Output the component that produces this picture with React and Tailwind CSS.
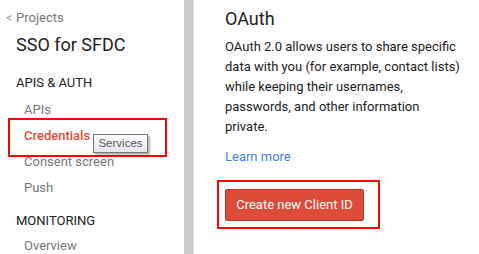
import React from 'react';

const navItem = 'h-[26px] flex items-center pl-[24px] text-[13px] text-[#777777]';
const sectionHead = 'h-[18px] flex items-center pl-[16px] text-[13px] text-[#222222] uppercase';

function Sidebar() {
  return (
    <div className="w-[184px] shrink-0 bg-white">
      {/* back link */}
      <div className="h-[35px] flex items-center pl-[6px] text-[13px] text-[#777777]">
        <span className="text-[12px] text-[#999999] mr-[4px]">&lt;</span>
        <span>Projects</span>
      </div>
      <div className="h-[19px] flex items-center pl-[16px] text-[18px] text-[#222222]">SSO for SFDC</div>

      <div className="mt-[20px]">
        <div className={sectionHead}>APIs &amp; auth</div>
        <div className="mt-[5px]">
          <div className={navItem}>APIs</div>
          <div className="relative h-[26px] flex items-center pl-[24px] text-[13px] font-medium text-[#dd4b39]">
            Credentials
            {/* highlight box */}
            <div className="absolute left-[8px] top-[-5px] w-[159px] h-[39px] border-2 border-[#ff0000]" />
            {/* hover tooltip */}
            <div className="absolute left-[93px] top-[11px] w-[55px] h-[19px] flex items-center justify-center border border-[#767676] bg-gradient-to-b from-white to-[#e4e5f0] shadow-[2px_2px_2px_rgba(0,0,0,0.3)] text-[11.5px] font-normal text-[#575757] [font-family:'Liberation_Sans',sans-serif]">
              Services
            </div>
          </div>
          <div className={navItem}>Consent screen</div>
          <div className={navItem}>Push</div>
        </div>
      </div>

      <div className="mt-[11px]">
        <div className={sectionHead}>Monitoring</div>
        <div className="mt-[3px]">
          <div className={navItem}>Overview</div>
        </div>
      </div>
    </div>
  );
}

function OAuthPanel() {
  return (
    <div className="flex-1 pl-[31px] text-[#222222]">
      <div className="h-[37px] flex items-center text-[18px]">OAuth</div>
      <p className="w-[237px] text-[13px] leading-[20px]">
        OAuth 2.0 allows users to share specific data with you (for example, contact lists) while keeping their usernames, passwords, and other information private.
      </p>
      <div className="mt-[9px] h-[21px] flex items-center text-[13px] text-[#427fed]">Learn more</div>
      <div className="mt-[13px] ml-[-8px] inline-block border-2 border-[#ff0000] pl-[6px] pt-[7px] pb-[6px] pr-[14px]">
        <button className="w-[139px] h-[32px] rounded-[2px] bg-[#dd4b39] border border-[#c23321] text-white text-[13px]">
          Create new Client ID
        </button>
      </div>
    </div>
  );
}

export default function App() {
  return (
    <div className="w-[479px] h-[254px] overflow-hidden flex bg-white [font-family:Roboto,'Liberation_Sans',sans-serif]">
      <Sidebar />
      {/* scroll track */}
      <div className="w-[10px] shrink-0 bg-[#cccccc] border-r border-[#e2e2e2]" />
      <OAuthPanel />
    </div>
  );
}
